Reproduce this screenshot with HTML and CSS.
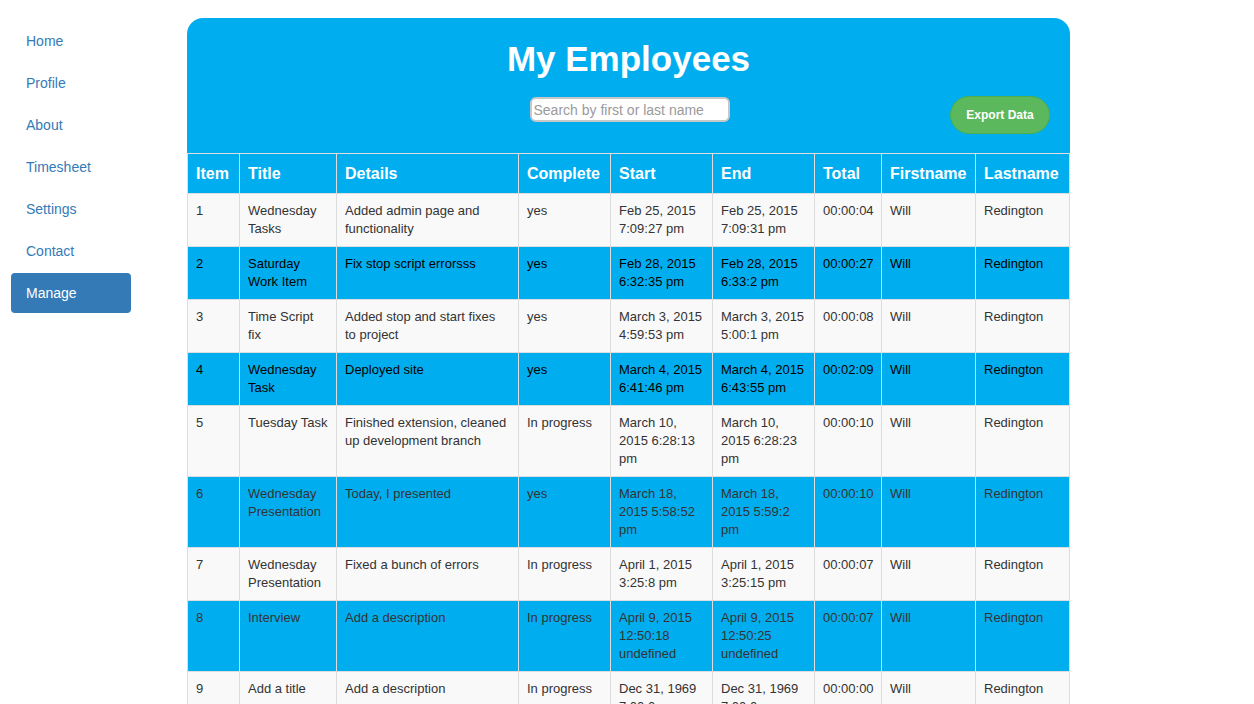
FILE: index.html
```html
<!DOCTYPE html>
<html>
<head>
<meta charset="utf-8">
<title>My Employees</title>
<link rel="stylesheet" href="styles.css">
</head>
<body>
<div class="page">
  <nav class="sidebar">
    <a class="nav-link" href="#">Home</a>
    <a class="nav-link" href="#">Profile</a>
    <a class="nav-link" href="#">About</a>
    <a class="nav-link" href="#">Timesheet</a>
    <a class="nav-link" href="#">Settings</a>
    <a class="nav-link" href="#">Contact</a>
    <a class="nav-link active" href="#">Manage</a>
  </nav>
  <main class="panel">
    <header class="panel-head">
      <h1 class="title">My Employees</h1>
      <div class="tools">
        <span></span>
        <input class="search" type="text" placeholder="Search by first or last name">
        <button class="export">Export Data</button>
      </div>
    </header>
    <table class="grid">
      <colgroup>
        <col style="width:52px"><col style="width:97px"><col style="width:182px"><col style="width:92px"><col style="width:102px"><col style="width:102px"><col style="width:67px"><col style="width:94px"><col style="width:94px">
      </colgroup>
      <thead>
        <tr><th>Item</th><th>Title</th><th>Details</th><th>Complete</th><th>Start</th><th>End</th><th>Total</th><th>Firstname</th><th>Lastname</th></tr>
      </thead>
      <tbody>
        <tr class="odd"><td>1</td><td>Wednesday Tasks</td><td class="details">Added admin page and functionality</td><td>yes</td><td>Feb 25, 2015 7:09:27 pm</td><td>Feb 25, 2015 7:09:31 pm</td><td>00:00:04</td><td>Will</td><td>Redington</td></tr>
        <tr class="even dark"><td>2</td><td>Saturday Work Item</td><td class="details">Fix stop script errorsss</td><td>yes</td><td>Feb 28, 2015 6:32:35 pm</td><td>Feb 28, 2015 6:33:2 pm</td><td>00:00:27</td><td>Will</td><td>Redington</td></tr>
        <tr class="odd"><td>3</td><td>Time Script fix</td><td class="details">Added stop and start fixes to project</td><td>yes</td><td>March 3, 2015 4:59:53 pm</td><td>March 3, 2015 5:00:1 pm</td><td>00:00:08</td><td>Will</td><td>Redington</td></tr>
        <tr class="even dark"><td>4</td><td>Wednesday Task</td><td class="details">Deployed site</td><td>yes</td><td>March 4, 2015 6:41:46 pm</td><td>March 4, 2015 6:43:55 pm</td><td>00:02:09</td><td>Will</td><td>Redington</td></tr>
        <tr class="odd"><td>5</td><td>Tuesday Task</td><td class="details">Finished extension, cleaned up development branch</td><td>In progress</td><td>March 10, 2015 6:28:13 pm</td><td>March 10, 2015 6:28:23 pm</td><td>00:00:10</td><td>Will</td><td>Redington</td></tr>
        <tr class="even"><td>6</td><td>Wednesday Presentation</td><td class="details">Today, I presented</td><td>yes</td><td>March 18, 2015 5:58:52 pm</td><td>March 18, 2015 5:59:2 pm</td><td>00:00:10</td><td>Will</td><td>Redington</td></tr>
        <tr class="odd"><td>7</td><td>Wednesday Presentation</td><td class="details">Fixed a bunch of errors</td><td>In progress</td><td>April 1, 2015 3:25:8 pm</td><td>April 1, 2015 3:25:15 pm</td><td>00:00:07</td><td>Will</td><td>Redington</td></tr>
        <tr class="even"><td>8</td><td>Interview</td><td class="details">Add a description</td><td>In progress</td><td>April 9, 2015 12:50:18 undefined</td><td>April 9, 2015 12:50:25 undefined</td><td>00:00:07</td><td>Will</td><td>Redington</td></tr>
        <tr class="odd"><td>9</td><td>Add a title</td><td class="details">Add a description</td><td>In progress</td><td>Dec 31, 1969 7:00:0 pm</td><td>Dec 31, 1969 7:00:0 pm</td><td>00:00:00</td><td>Will</td><td>Redington</td></tr>
      </tbody>
    </table>
  </main>
</div>
</body>
</html>
```

FILE: styles.css
```css
* { box-sizing: border-box; }
html, body { margin: 0; padding: 0; background: #fff; }
body {
  font-family: "Liberation Sans", Arial, Helvetica, sans-serif;
  font-size: 14px;
  color: #333;
}
.page {
  display: flex;
  align-items: flex-start;
  padding-top: 18px;
}
.sidebar {
  width: 120px;
  margin-left: 11px;
  margin-right: 56px;
  margin-top: 3px;
  display: flex;
  flex-direction: column;
  gap: 2px;
  flex: none;
}
.nav-link {
  display: block;
  padding: 10px 15px;
  line-height: 20px;
  color: #337ab7;
  text-decoration: none;
  border-radius: 4px;
}
.nav-link.active {
  background: #337ab7;
  color: #fff;
}
.panel {
  width: 883px;
  flex: none;
  background: #fff;
}
.panel-head {
  background: #00aeef;
  border-radius: 16px 16px 0 0;
  height: 135px;
  padding-top: 20px;
}
.title {
  margin: 0;
  text-align: center;
  color: #fff;
  font-size: 35px;
  line-height: 42px;
  font-weight: bold;
}
.tools {
  display: grid;
  grid-template-columns: 1fr auto 1fr;
  align-items: start;
  margin-top: 16px;
}
.search {
  width: 200px;
  height: 25px;
  margin-left: 2px;
  margin-top: 1px;
  border: 2px solid #c8c8c8;
  border-radius: 6px;
  background: #fff;
  padding: 0 2px;
  font-family: "Liberation Sans", Arial, sans-serif;
  font-size: 14px;
  color: #333;
  outline: none;
}
.search::placeholder { color: #9a9a9a; }
.export {
  justify-self: end;
  margin-right: 20px;
  width: 100px;
  height: 38px;
  border: 1px solid #4cae4c;
  border-radius: 19px;
  background: #5cb85c;
  color: #fff;
  font-family: "Liberation Sans", Arial, sans-serif;
  font-size: 12px;
  font-weight: bold;
  padding: 0;
}
.grid {
  width: 883px;
  table-layout: fixed;
  border-collapse: collapse;
  border-right: 1px solid #ddd;
}
.grid th, .grid td {
  border: 1px solid #ddd;
  padding: 8px;
  text-align: left;
  vertical-align: top;
}
.grid th {
  padding-top: 9px;
  background: #00aeef;
  color: #fff;
  font-size: 16px;
  line-height: 22px;
  font-weight: bold;
}
.grid td {
  font-size: 13px;
  line-height: 18px;
  color: #333;
}
.grid td.details { padding-right: 10px; }
.grid tr.odd td { background: #f9f9f9; }
.grid tr.even td { background: #00aeef; }
.grid tr.dark td { color: #000; }
```
